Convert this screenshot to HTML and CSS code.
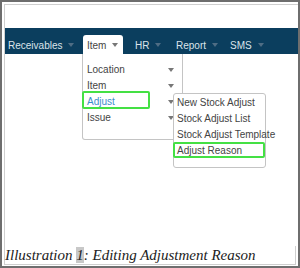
FILE: index.html
```html
<!DOCTYPE html>
<html>
<head>
    <meta charset="utf-8" />
    <link rel="stylesheet" href="styles.css">
</head>
<body>
    <div class="frame">
        <div class="sheet">
            <div class="shot">
                <div class="menubar">
                    <div class="menu_item w_rec">Receivables<span class="caret"></span></div>
                    <div class="menu_item w_item open">Item<span class="caret"></span>
                        <div class="dropdown">
                            <div class="dd_row">Location<span class="caret"></span></div>
                            <div class="dd_row">Item<span class="caret"></span></div>
                            <div class="dd_row active">Adjust<span class="caret"></span></div>
                            <div class="dd_row">Issue<span class="caret"></span></div>
                            <div class="mark mark_adjust"></div>
                        </div>
                        <div class="submenu">
                            <div class="sub_row">New Stock Adjust</div>
                            <div class="sub_row">Stock Adjust List</div>
                            <div class="sub_row">Stock Adjust Template</div>
                            <div class="sub_row">Adjust Reason</div>
                            <div class="mark mark_reason"></div>
                        </div>
                    </div>
                    <div class="menu_item w_hr">HR<span class="caret"></span></div>
                    <div class="menu_item w_report">Report<span class="caret"></span></div>
                    <div class="menu_item w_sms">SMS<span class="caret"></span></div>
                </div>
            </div>
            <div class="caption">Illustration <span class="num">1</span>: Editing Adjustment Reason</div>
        </div>
    </div>
</body>
</html>
```

FILE: styles.css
```css
body {
    margin: 0;
    background: white;
}

.frame {
    width: 300px;
    height: 268px;
    box-sizing: border-box;
    border: 2px solid #6e6e6e;
    padding: 2px 0 1px 2px;
    display: flex;
}

.sheet {
    flex: 1;
    border-left: 1px solid #cfcfcf;
    border-top: 1px solid #cfcfcf;
    display: flex;
    flex-direction: column;
}

.shot {
    flex: 1;
    padding-top: 23px;
}

.menubar {
    height: 26px;
    background: #0b3e5e;
    display: flex;
    align-items: flex-end;
    font-family: "Liberation Sans", Arial, sans-serif;
    font-size: 10px;
    color: #dbe4ea;
}

.menu_item {
    position: relative;
    height: 19px;
    line-height: 19px;
    box-sizing: border-box;
    display: flex;
    align-items: center;
    padding-top: 1px;
}

.w_rec {
    width: 78px;
    padding-left: 3px;
}

.w_item {
    width: 40px;
    padding-left: 4px;
    background: white;
    color: #444;
    border-radius: 3px 3px 0 0;
}

.w_hr {
    width: 47px;
    padding-left: 12px;
}

.w_report {
    width: 56px;
    padding-left: 6px;
}

.w_sms {
    width: 40px;
    padding-left: 4px;
}

.caret {
    display: inline-block;
    width: 0;
    height: 0;
    margin-left: 6px;
    border-left: 3.5px solid transparent;
    border-right: 3.5px solid transparent;
    border-top: 4px solid #4f6d84;
}

.w_item .caret {
    border-top-color: #777;
}

.dropdown {
    position: absolute;
    left: -1px;
    top: 19px;
    width: 101px;
    height: 86px;
    box-sizing: border-box;
    background: white;
    border: 1px solid #c4c4c4;
    border-top: none;
    border-radius: 0 0 3px 3px;
    padding-top: 8px;
}

.dd_row {
    height: 16px;
    line-height: 16px;
    padding-left: 4px;
    display: flex;
    align-items: center;
    justify-content: space-between;
    padding-right: 8px;
    color: #444;
}

.dd_row .caret {
    border-top-color: #777;
}

.dd_row.active {
    color: #3b8dcb;
}

.submenu {
    position: absolute;
    left: 90px;
    top: 58px;
    width: 93px;
    height: 75px;
    box-sizing: border-box;
    background: white;
    border: 1px solid #c4c4c4;
    border-radius: 3px;
    padding-top: 1px;
}

.sub_row {
    height: 16px;
    line-height: 16px;
    padding-left: 3px;
    color: #444;
    white-space: nowrap;
}

.mark {
    position: absolute;
    border: 2px solid #44e044;
    border-radius: 2px;
}

.mark_adjust {
    left: -1px;
    top: 37px;
    width: 64px;
    height: 14px;
}

.mark_reason {
    left: -1px;
    top: 48px;
    width: 88px;
    height: 12px;
}

.caption {
    height: 18px;
    margin-right: 2px;
    border-right: 1px solid #cfcfcf;
    border-bottom: 1px solid #cfcfcf;
    font-family: "Liberation Serif", "Times New Roman", serif;
    font-style: italic;
    font-size: 15px;
    line-height: 18px;
    color: #222;
    padding-left: 0;
    white-space: nowrap;
}

.num {
    background: #c8c8c8;
}
```
